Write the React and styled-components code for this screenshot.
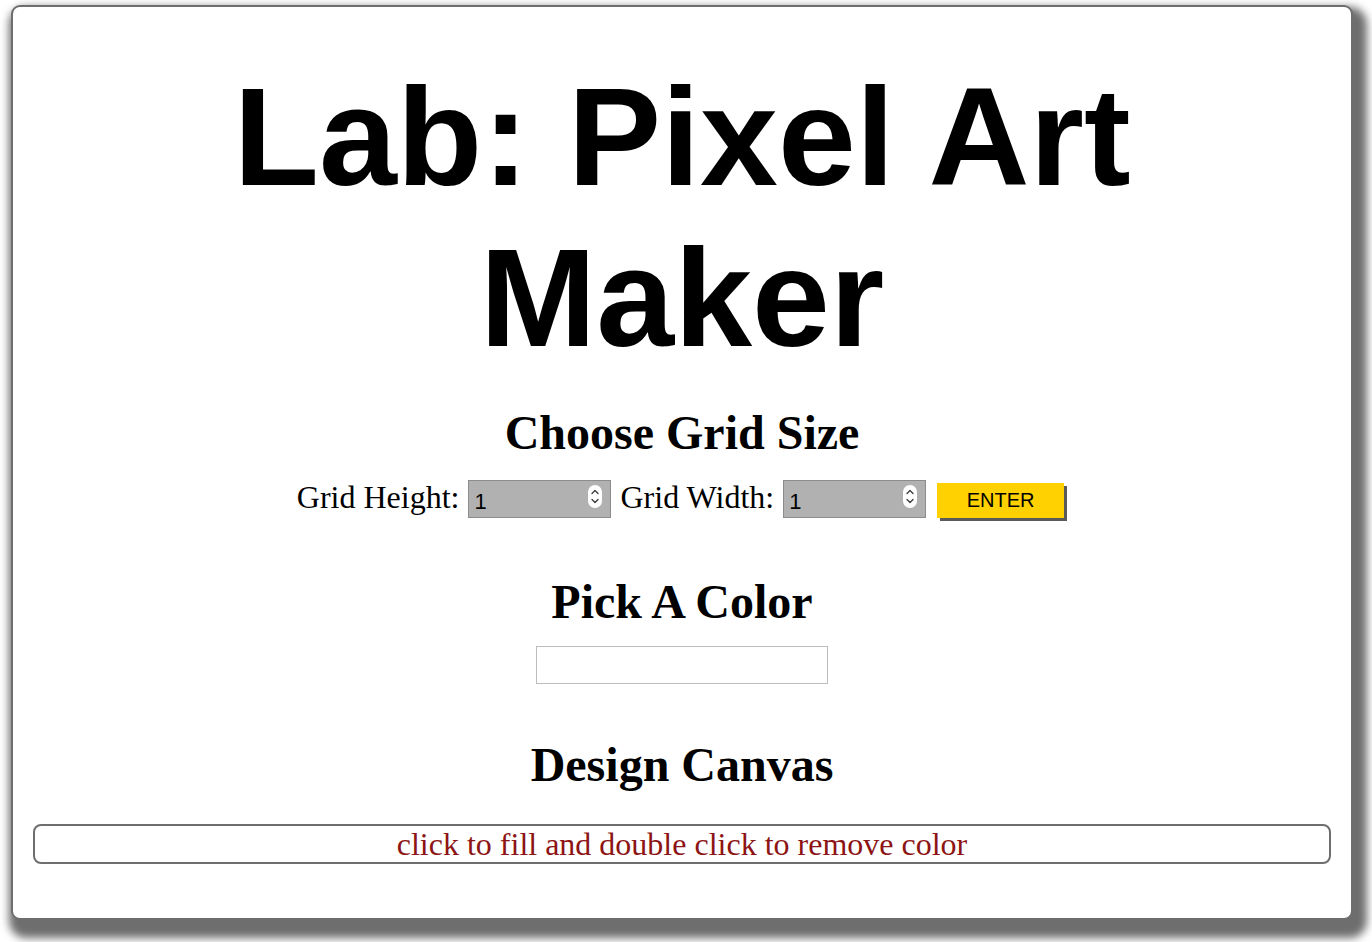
import React from "react";
import styled, { createGlobalStyle } from "styled-components";

const Global = createGlobalStyle`
  html, body { margin: 0; padding: 0; background: #ffffff; }
  body { font-family: "Liberation Serif", "Times New Roman", serif; color: #000; }
  * { box-sizing: border-box; }
`;

const Page = styled.div`
  padding: 5px 20px 25px 11px;
`;

const Card = styled.main`
  width: 1342px;
  border: 2px solid #6e6e6e;
  border-radius: 9px;
  background: #ffffff;
  box-shadow: 6px 10px 8px 8px #6e6e6e;
  padding: 49px 20px 54px 20px;
  display: flex;
  flex-direction: column;
  align-items: center;
`;

const Title = styled.h1`
  margin: 0;
  font-family: "Liberation Sans", Arial, Helvetica, sans-serif;
  font-weight: 700;
  font-size: 140px;
  line-height: 161px;
  text-align: center;
  width: 100%;
`;

const Heading = styled.h2`
  margin: ${(p) => p.$top}px 0 0;
  font-family: "Liberation Serif", "Times New Roman", serif;
  font-weight: 700;
  font-size: 48px;
  line-height: 55px;
  text-align: center;
`;

const SizeForm = styled.form`
  margin-top: 20px;
  display: flex;
  align-items: center;
  height: 38px;
`;

const Label = styled.label`
  font-family: "Liberation Serif", "Times New Roman", serif;
  font-size: 32px;
  line-height: 38px;
  margin-right: 9px;
  position: relative;
  top: -2px;
`;

const NumberWrap = styled.span`
  position: relative;
  display: inline-block;
  width: 143px;
  height: 38px;
  margin-right: ${(p) => p.$gap}px;
`;

const NumberInput = styled.input`
  width: 100%;
  height: 100%;
  margin: 0;
  border: 1px solid #8c8c8c;
  background: #b1b1b1;
  padding: 5px 24px 0 5px;
  font-family: "Liberation Sans", Arial, Helvetica, sans-serif;
  font-size: 22px;
  color: #000;
  outline: none;
  -moz-appearance: textfield;
  &::-webkit-inner-spin-button,
  &::-webkit-outer-spin-button {
    -webkit-appearance: none;
    margin: 0;
  }
`;

const Spinner = styled.span`
  position: absolute;
  right: 9px;
  top: 5px;
  width: 14px;
  height: 23px;
  border-radius: 7px;
  background: #ffffff;
  display: flex;
  align-items: center;
  justify-content: center;
  pointer-events: none;
`;

const EnterButton = styled.button`
  width: 127px;
  height: 35px;
  margin: 0 3px 0 0;
  border: none;
  background: #ffd100;
  box-shadow: 3px 3px 0 #5a5a5a;
  font-family: "Liberation Sans", Arial, Helvetica, sans-serif;
  font-size: 20px;
  color: #000;
  cursor: pointer;
  padding: 0;
  position: relative;
  top: 1px;
`;

const ColorPicker = styled.input`
  margin-top: 17px;
  width: 292px;
  height: 38px;
  padding: 0;
  border: 1px solid #bdbdbd;
  background: #ffffff;
  -webkit-appearance: none;
  appearance: none;
  cursor: pointer;
  &::-webkit-color-swatch-wrapper { padding: 0; }
  &::-webkit-color-swatch { border: none; }
`;

const CanvasTable = styled.table`
  margin-top: 32px;
  width: 100%;
  border: 2px solid #6e6e6e;
  border-radius: 8px;
  border-spacing: 0;
`;

const Hint = styled.td`
  padding: 0;
  height: 36px;
  text-align: center;
  font-family: "Liberation Serif", "Times New Roman", serif;
  font-size: 32px;
  line-height: 34px;
  color: #8d1414;
`;

function Spin() {
  return (
    <Spinner>
      <svg width="10" height="19" viewBox="0 0 10 19" fill="none">
        <path d="M2 6.5 L5 3.5 L8 6.5" stroke="#3a3a3a" strokeWidth="1.3" strokeLinecap="round" strokeLinejoin="round" />
        <path d="M2 12.5 L5 15.5 L8 12.5" stroke="#3a3a3a" strokeWidth="1.3" strokeLinecap="round" strokeLinejoin="round" />
      </svg>
    </Spinner>
  );
}

export default function App() {
  return (
    <>
      <Global />
      <Page>
        <Card>
          <Title>Lab: Pixel Art Maker</Title>
          <Heading $top={27}>Choose Grid Size</Heading>
          <SizeForm onSubmit={(e) => e.preventDefault()}>
            <Label htmlFor="inputHeight">Grid Height:</Label>
            <NumberWrap $gap={9}>
              <NumberInput id="inputHeight" type="number" min="1" defaultValue="1" />
              <Spin />
            </NumberWrap>
            <Label htmlFor="inputWidth">Grid Width:</Label>
            <NumberWrap $gap={11}>
              <NumberInput id="inputWidth" type="number" min="1" defaultValue="1" />
              <Spin />
            </NumberWrap>
            <EnterButton type="submit">ENTER</EnterButton>
          </SizeForm>
          <Heading $top={56}>Pick A Color</Heading>
          <ColorPicker type="color" defaultValue="#ffffff" />
          <Heading $top={53}>Design Canvas</Heading>
          <CanvasTable>
            <tbody>
              <tr>
                <Hint>click to fill and double click to remove color</Hint>
              </tr>
            </tbody>
          </CanvasTable>
        </Card>
      </Page>
    </>
  );
}
